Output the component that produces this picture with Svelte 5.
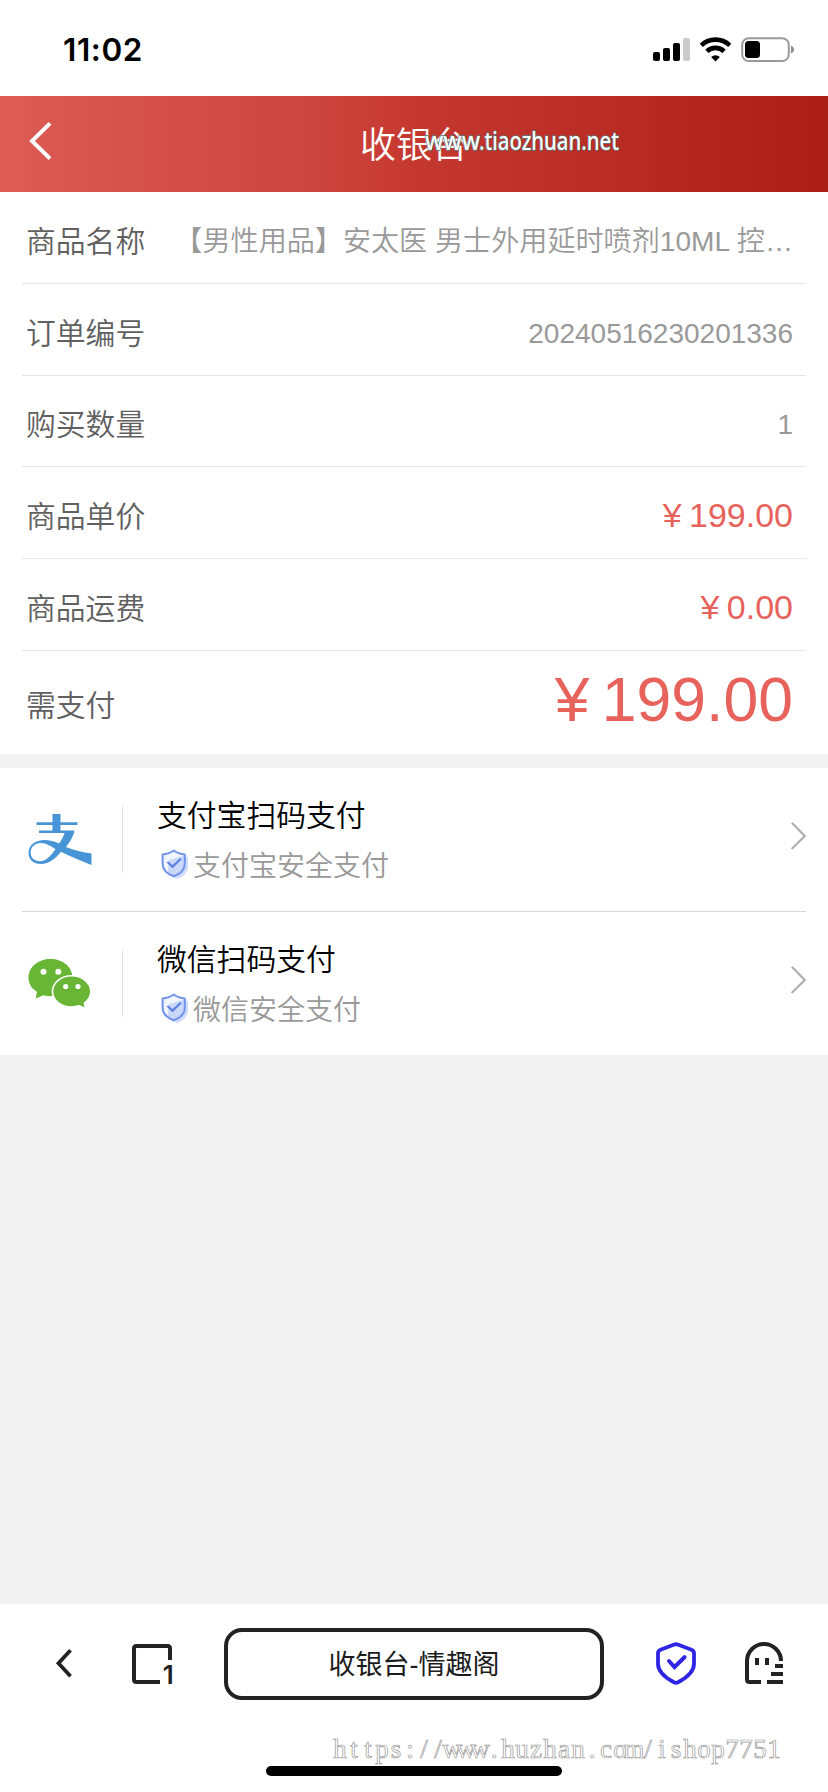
<script lang="ts">
  type Row = {
    label: string;
    value: string;
    kind: 'text' | 'price' | 'total';
  };

  type PayMethod = {
    id: 'alipay' | 'wechat';
    title: string;
    note: string;
  };

  const rows: Row[] = [
    { label: '商品名称', value: '【男性用品】安太医 男士外用延时喷剂10ML 控…', kind: 'text' },
    { label: '订单编号', value: '20240516230201336', kind: 'text' },
    { label: '购买数量', value: '1', kind: 'text' },
    { label: '商品单价', value: '¥ 199.00', kind: 'price' },
    { label: '商品运费', value: '¥ 0.00', kind: 'price' },
    { label: '需支付', value: '¥ 199.00', kind: 'total' }
  ];

  const methods: PayMethod[] = [
    { id: 'alipay', title: '支付宝扫码支付', note: '支付宝安全支付' },
    { id: 'wechat', title: '微信扫码支付', note: '微信安全支付' }
  ];

  const siteUrl = 'https://www.huzhan.com/ishop7751';
  // one x per character keeps the serif letters on a fixed pitch
  const siteUrlX = [...siteUrl].map((_, i) => 8 + i * 14).join(' ');
</script>

<div class="phone">
  <div class="status">
    <span class="time">11:02</span>
    <svg class="status-icons" width="144" height="30" viewBox="0 0 144 30">
      <rect x="2" y="17" width="7" height="9" rx="2" />
      <rect x="12" y="13" width="7" height="13" rx="2" />
      <rect x="22" y="8" width="7" height="18" rx="2" />
      <rect x="32" y="3" width="7" height="23" rx="2" fill="#cbcbcb" />
      <g fill="none" stroke="#000" stroke-width="4.6">
        <path d="M50.3 10.3a20.5 20.5 0 0 1 28.4 0" />
        <path d="M55.9 16.3a12.4 12.4 0 0 1 17.2 0" />
      </g>
      <path d="M64.5 26.4l-4.4-4.5a6.4 6.4 0 0 1 8.8 0z" />
      <rect x="91.2" y="3.2" width="46.6" height="22.8" rx="6.5" fill="none" stroke="#999" stroke-width="2" />
      <rect x="94" y="6" width="15" height="17" rx="3.5" />
      <path d="M140 10.5c4 1.5 4 6.5 0 8z" fill="#8c8c8c" />
    </svg>
  </div>

  <header>
    <svg class="back" width="24" height="40" viewBox="0 0 24 40">
      <path d="M22 2.4L4 20l18 17.6" fill="none" stroke="#fff" stroke-width="4" />
    </svg>
    <h1>收银台</h1>
    <svg class="site-mark" width="204" height="44" viewBox="0 0 204 44">
      <text y="30.5">
        <tspan x="4" textLength="55" lengthAdjust="spacingAndGlyphs">www</tspan><tspan x="58" textLength="140" lengthAdjust="spacingAndGlyphs">.tiaozhuan.net</tspan>
      </text>
    </svg>
  </header>

  <section class="order">
    {#each rows as row}
      <div class="row {row.kind}">
        <span class="label">{row.label}</span>
        <span class="value">{row.value}</span>
      </div>
    {/each}
  </section>

  <section class="methods">
    {#each methods as method}
      <div class="method">
        <div class="logo">
          {#if method.id === 'alipay'}
            <svg width="66" height="54" viewBox="0 0 66 54">
              <g fill="#4795d6">
                <path d="M24.5 1h8v18h-8z" />
                <path d="M8.5 9.2h41V12h-41zM11 17.500h35v2.600H11z" />
                <path d="M37 18.500h9.500c-2 6.500-5 11-8.500 15.500 8 3.300 17 5.500 25.500 6.500v11.500c-11-4-21-8.500-30.500-13.200C27.500 45.500 21.500 51 13 51 5.500 51 .5 46.500.5 40c0-8 7-13 16-13 5 0 10 1.500 14.500 3.500 2.800-3.800 4.700-7.500 6-12zM27.500 36c-5-3-9.500-6-14.500-6C6.500 30 2.600 34.500 2.600 39.500c0 5 3.700 8.700 9.200 8.700 6.700 0 11.700-6.200 15.700-12.200z" fill-rule="evenodd" />
              </g>
            </svg>
          {:else}
            <svg width="66" height="54" viewBox="0 0 66 54">
              <path d="M22.500 2c12.300 0 22 8 22 18.500S34.800 39.200 22.500 39.200c-2.500 0-5-.4-7.200-1L7.800 41.500l1.200-6.700C3.500 31.300.5 26.500.5 20.700.5 10 10.200 2 22.500 2z" fill="#69b536" />
              <path d="M43.500 18.700c10.500 0 19.300 7 19.300 15.800 0 4.700-2.500 8.700-6.400 11.600l1.200 5.600-6.300-2.900c-2.400.8-5 1.200-7.800 1.200-10.500 0-19-6.700-19-15.500s8.500-15.800 19-15.800z" fill="#69b536" stroke="#fff" stroke-width="1.6" />
              <g fill="#fff">
                <circle cx="15.5" cy="14.8" r="3" />
                <circle cx="30.3" cy="14.8" r="3" />
                <circle cx="37.7" cy="29.5" r="2.6" />
                <circle cx="50" cy="29.5" r="2.6" />
              </g>
            </svg>
          {/if}
        </div>
        <div class="info">
          <div class="title">{method.title}</div>
          <div class="note">
            <svg width="28" height="32" viewBox="0 0 28 32">
              <path d="M16 5.5c4 2.500 7 3 11 3.500v9c0 6-4 10.500-11 13-4-1.500-7-3.500-9-6z" fill="#d0dcfc" />
              <path d="M12.700 2.500c3.300 2.500 7 3.600 11.100 3.900v9.100c0 6.200-4.200 10.300-11.100 12.800C5.800 25.800 1.600 21.700 1.600 15.500V6.400c4.100-.3 7.800-1.400 11.100-3.900z" fill="#f1f5ff" />
              <path d="M23 7.500v8.500c0 5-3.800 9-10.300 11.400-2.500-1-4.500-2-6-3.500L8 12z" fill="#c9d8fb" />
              <path d="M12.700 2.500c3.300 2.500 7 3.600 11.100 3.900v9.100c0 6.200-4.200 10.300-11.100 12.800C5.800 25.800 1.600 21.700 1.600 15.500V6.400c4.100-.3 7.800-1.400 11.100-3.900z" fill="none" stroke="#7292ea" stroke-width="2" stroke-linejoin="round" />
              <path d="M6.500 14l5 4.700 8.300-8" fill="none" stroke="#5a7fe2" stroke-width="2.2" />
            </svg>
            <span>{method.note}</span>
          </div>
        </div>
        <svg class="arrow" width="16" height="30" viewBox="0 0 16 30">
          <path d="M1.800 1.800L14.800 15l-13.200 13" fill="none" stroke="#b0b0b0" stroke-width="2.2" />
        </svg>
      </div>
    {/each}
  </section>

  <footer>
    <nav>
      <svg class="nav-back" width="20" height="32" viewBox="0 0 20 32">
        <path d="M16.500 2.200L4.500 15.200l12 13" fill="none" stroke="#222" stroke-width="3.8" />
      </svg>
      <svg class="nav-tabs" width="50" height="48" viewBox="0 0 50 48">
        <path d="M30 42H6.500Q4 42 4 39.500V8.500Q4 6 6.500 6h31Q40 6 40 8.500V20" fill="none" stroke="#222" stroke-width="4" />
        <text x="32.8" y="44">1</text>
      </svg>
      <div class="address">收银台-情趣阁</div>
      <svg class="nav-shield" width="44" height="46" viewBox="0 0 44 46">
        <path d="M20.300 3.600Q22 2.900 23.700 3.600L37.500 8.700Q40 9.700 40 12.300V23c0 7-6 13-16 18.300q-2 1-4 0C10 36 4 30 4 23V12.300q0-2.600 2.500-3.600z" fill="none" stroke="#2e26e4" stroke-width="3.8" />
        <path d="M15 20l5.500 6L30.500 16.200" fill="none" stroke="#2e26e4" stroke-width="4" stroke-linecap="round" />
      </svg>
      <svg class="nav-ghost" width="42" height="46" viewBox="0 0 42 46">
        <g fill="none" stroke="#222" stroke-width="4">
          <path d="M18 41H6.500Q4 41 4 38.500V20a17 17 0 0 1 34 0" />
          <path d="M14 17v7M24 17v7" />
          <path d="M32 25h8M28 33h12M24 41h16" />
        </g>
      </svg>
    </nav>
    <div class="home-bar"></div>
    <svg class="url-mark" width="460" height="40" viewBox="0 0 460 40">
      <text x={siteUrlX} y="27" text-anchor="middle">{siteUrl}</text>
    </svg>
  </footer>
</div>

<style>
  :global(body) {
    background: #f2f2f2;
  }

  .phone {
    display: flex;
    flex-direction: column;
    width: 828px;
    height: 1792px;
    overflow: hidden;
    background: #f2f2f2;
    font-family: 'Liberation Sans', 'Noto Sans CJK SC', sans-serif;
    font-weight: 350;
  }

  svg {
    display: block;
    flex: none;
    overflow: visible;
  }

  .status {
    box-sizing: border-box;
    display: flex;
    justify-content: space-between;
    align-items: center;
    height: 96px;
    padding: 4px 33px 0 63px;
    background: #fff;
  }

  .time {
    font: 600 31.5px/36px Inter, sans-serif;
    letter-spacing: 0.6px;
    color: #000;
  }

  header {
    position: relative;
    display: flex;
    justify-content: center;
    align-items: center;
    height: 96px;
    background: linear-gradient(90deg, #dc5c56 0%, #d44f49 20%, #cd4640 37%, #c5382f 50%, #b82a22 77%, #aa1f15 100%);
  }

  .back {
    position: absolute;
    left: 28px;
    top: 25px;
  }

  h1 {
    margin: 3px 0 0;
    font-size: 36px;
    line-height: 50px;
    font-weight: 350;
    color: #fff;
  }

  .site-mark {
    position: absolute;
    left: 421px;
    top: 23px;
  }

  .site-mark text {
    font: 500 25px 'Noto Sans', sans-serif;
    fill: #fff;
    stroke: #4f7f82;
    stroke-width: 1.4px;
    paint-order: stroke;
  }

  .order {
    height: 562px;
    padding: 0 22px;
    background: #fff;
  }

  .row {
    box-sizing: border-box;
    display: flex;
    justify-content: space-between;
    align-items: center;
    height: 91.8px;
    padding: 9px 13px 0 4px;
    border-bottom: 1px solid #e6e6e6;
    white-space: nowrap;
  }

  .label {
    font-size: 29.8px;
    line-height: 44px;
    color: #606060;
  }

  .value {
    font-size: 28px;
    line-height: 44px;
    color: #999;
  }

  .row:first-child .value {
    font-size: 28.1px;
  }

  .price .value {
    margin-top: -4px;
    font-size: 34px;
    word-spacing: -2px;
    color: #e8625c;
  }

  .total {
    height: 103px;
    border-bottom: 0;
    padding-top: 8px;
  }

  .total .value {
    margin-top: -15px;
    font-size: 62.5px;
    line-height: 72px;
    word-spacing: -5px;
    color: #e8625c;
  }

  .methods {
    margin-top: 14px;
    padding: 0 22px;
    background: #fff;
  }

  .method {
    box-sizing: border-box;
    display: flex;
    align-items: center;
    height: 143px;
  }

  .method:first-child {
    height: 144px;
    border-bottom: 1px solid #d6d8d8;
  }

  .logo {
    display: flex;
    align-items: center;
    width: 94px;
    height: 67px;
    margin-left: 6px;
    border-right: 1px solid #e2e2e2;
  }

  .info {
    flex: 1;
    padding: 2px 0 0 34px;
  }

  .title {
    font-size: 29.8px;
    line-height: 44px;
    font-weight: 350;
    color: #000;
  }

  .note {
    display: flex;
    align-items: center;
    gap: 4px;
    margin-top: 8px;
    padding-left: 4px;
    font-size: 28px;
    line-height: 42px;
    color: #999;
  }

  .note svg {
    margin-bottom: 6px;
  }

  .arrow {
    margin-bottom: 8px;
  }

  footer {
    position: relative;
    box-sizing: border-box;
    height: 188px;
    margin-top: auto;
    padding-top: 24px;
    background: #fff;
  }

  nav {
    display: flex;
    align-items: center;
    height: 72px;
    padding-left: 54px;
  }

  .nav-tabs {
    margin-left: 56px;
  }

  .nav-tabs text {
    font: 600 26px Inter, sans-serif;
    fill: #222;
  }

  .address {
    box-sizing: border-box;
    width: 380px;
    height: 72px;
    margin-left: 44px;
    border: 4px solid #222;
    border-radius: 18px;
    font-size: 27px;
    line-height: 66px;
    font-weight: 400;
    text-align: center;
    color: #1c1c1c;
  }

  .nav-shield {
    margin-left: 50px;
  }

  .nav-ghost {
    margin-left: 45px;
  }

  .home-bar {
    width: 296px;
    height: 10px;
    margin: 66px auto 0;
    border-radius: 5px;
    background: #000;
  }

  .url-mark {
    position: absolute;
    left: 332px;
    top: 127px;
  }

  .url-mark text {
    font: 400 27px 'Liberation Serif', serif;
    fill: #fff;
    stroke: #9a9a9a;
    stroke-width: 0.7px;
  }
</style>
